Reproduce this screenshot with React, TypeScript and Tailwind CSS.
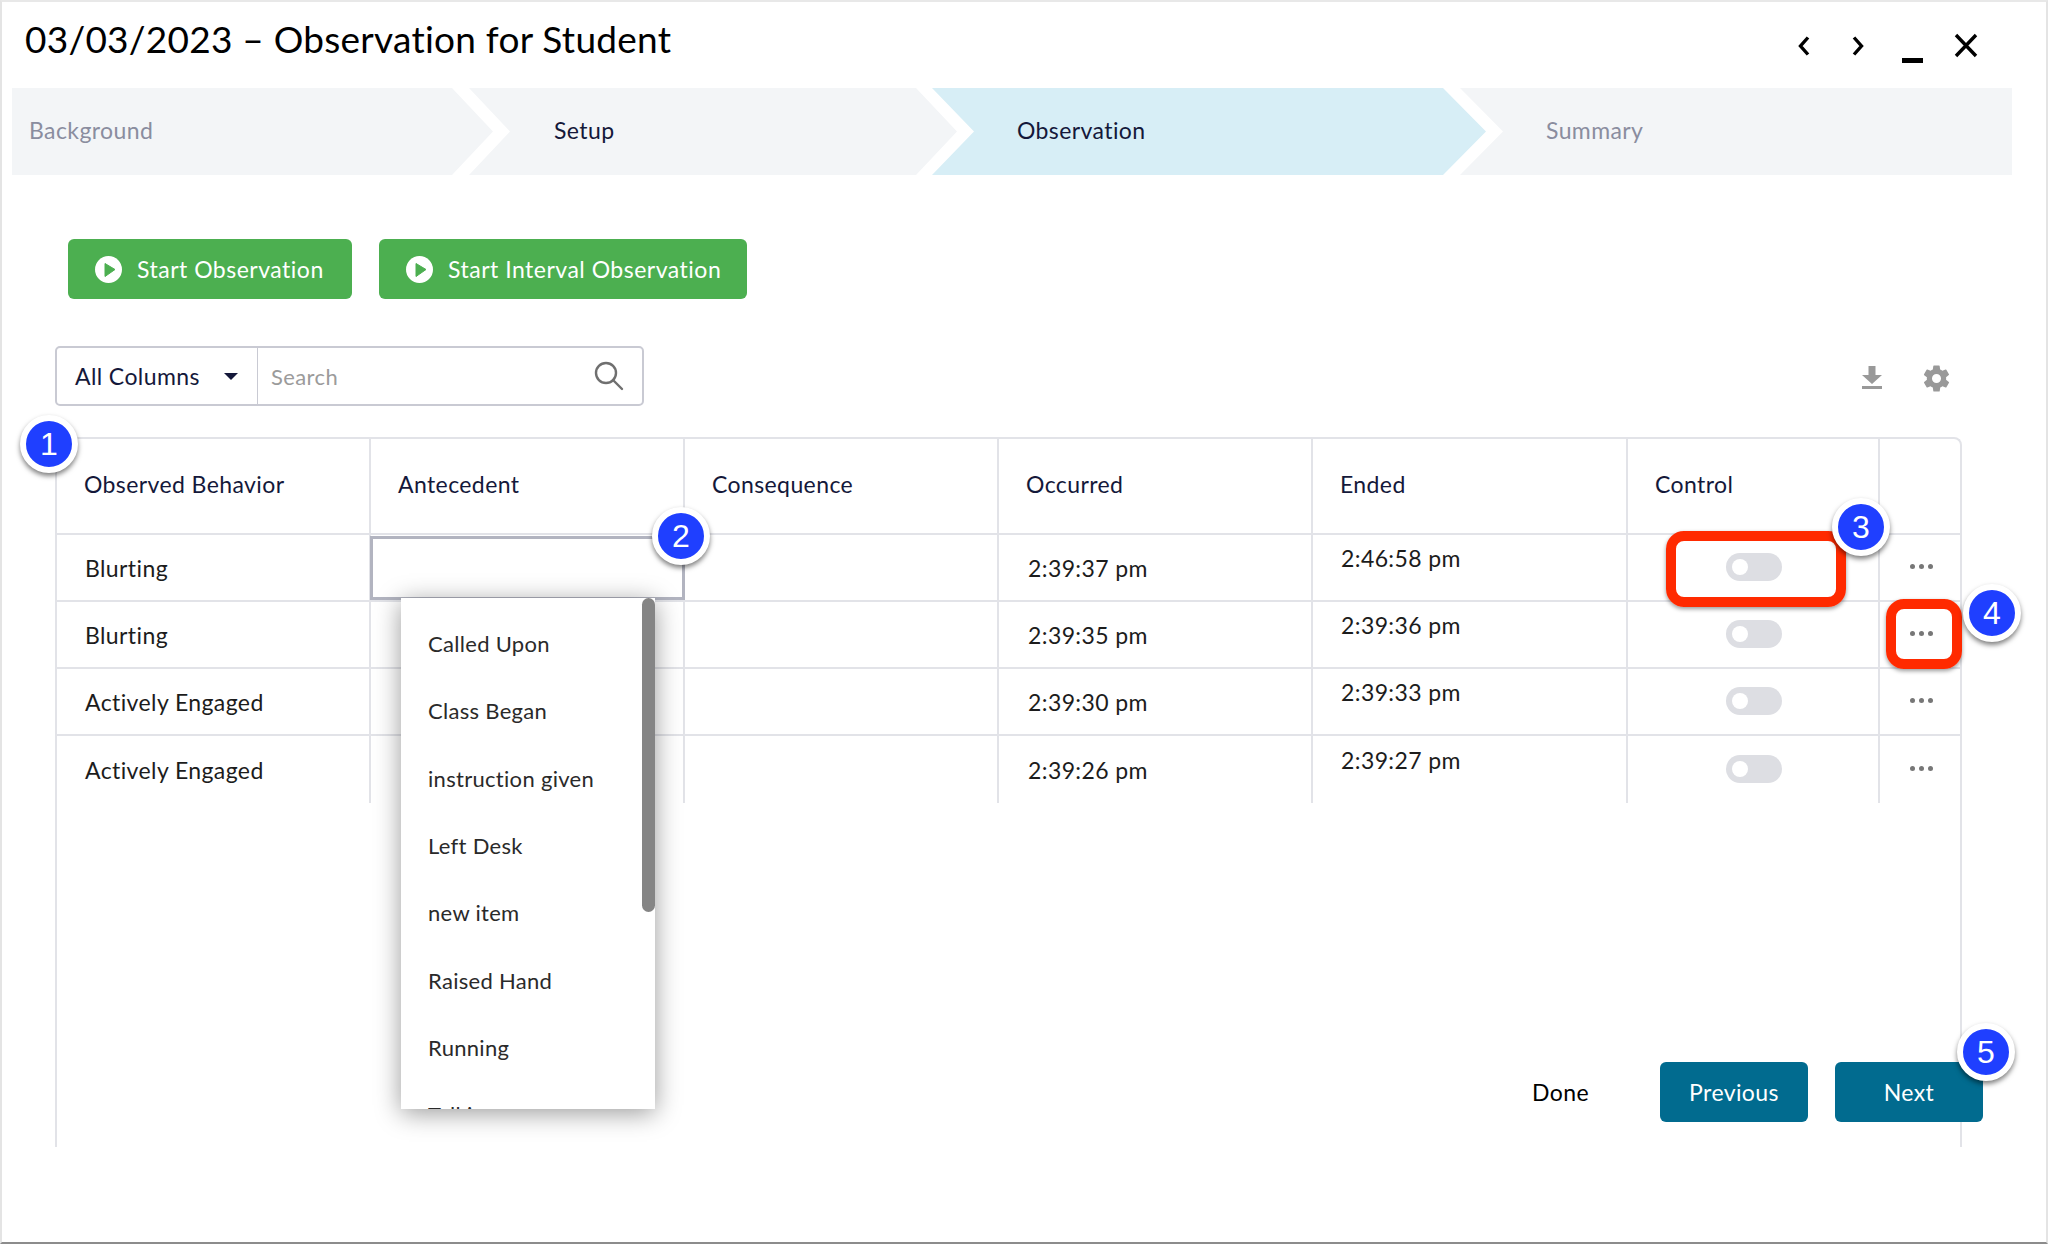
const font = "font-['Lato','Liberation_Sans',sans-serif]"

const rows = [
  { name: 'Blurting', occurred: '2:39:37 pm', ended: '2:46:58 pm' },
  { name: 'Blurting', occurred: '2:39:35 pm', ended: '2:39:36 pm' },
  { name: 'Actively Engaged', occurred: '2:39:30 pm', ended: '2:39:33 pm' },
  { name: 'Actively Engaged', occurred: '2:39:26 pm', ended: '2:39:27 pm' },
]

const items = ['Called Upon', 'Class Began', 'instruction given', 'Left Desk', 'new item', 'Raised Hand', 'Running', 'Talking']

function StartButton({ label, width }: { label: string; width: string }) {
  return (
    <button className={`${width} h-[60px] flex items-center gap-[15px] pl-[27px] bg-[#4caf50] rounded-[6px] text-white text-[23px] tracking-[0.5px]`}>
      <svg width="27" height="27" viewBox="0 0 27 27">
        <circle cx="13.5" cy="13.5" r="13.5" fill="#fff" />
        <path d="M10 7.5L20 13.5L10 20.5z" fill="#4caf50" stroke="#4caf50" strokeLinejoin="round" />
      </svg>
      {label}
    </button>
  )
}

function Badge({ n, className }: { n: number; className: string }) {
  return (
    <div className={`absolute ${className} w-[58px] h-[58px] rounded-full bg-[#1f3fff] border-[6px] border-white shadow-[0_3px_5px_rgba(0,0,0,0.5)] flex items-center justify-center text-white text-[32px] font-['Liberation_Sans',sans-serif]`}>
      {n}
    </div>
  )
}

export default function App() {
  return (
    <div className={`${font} relative w-[2048px] h-[1244px] overflow-hidden bg-white border-2 border-l-[#e4e4e4] border-r-[#e4e4e4] border-t-[#e8e8e8] border-b-[#8c8c8c] text-[#14183a]`}>
      <div className="flex justify-between h-[86px]">
        <h1 className="pl-[23px] pt-[15px] text-[37px] leading-[44px] text-black tracking-[0.25px]">03/03/2023 – Observation for Student</h1>
        <div className="flex items-start text-black pr-[67px] pt-[31px]">
          <svg width="26" height="26" viewBox="0 0 26 26" fill="none" stroke="#000" strokeWidth="3.4"><path d="M17 4.5L9.5 13L17 21.5" /></svg>
          <svg className="ml-[28px]" width="26" height="26" viewBox="0 0 26 26" fill="none" stroke="#000" strokeWidth="3.4"><path d="M9 4.5L16.5 13L9 21.5" /></svg>
          <div className="ml-[31px] w-[21px] h-[26px] flex items-end"><div className="w-full h-[5px] bg-black translate-y-[4px]" /></div>
          <svg className="ml-[30px]" width="26" height="26" viewBox="0 0 26 26" fill="none" stroke="#000" strokeWidth="3.4"><path d="M3 2l20 21M23 2L3 23" /></svg>
        </div>
      </div>

      <div className="flex ml-[10px] h-[87px] text-[23px] tracking-[0.4px] items-stretch">
        <div className="w-[481px] bg-[#f3f5f7] flex items-center pb-[2px] pl-[17px] text-[#8a8d9f] [clip-path:polygon(0_0,440px_0,100%_50%,440px_100%,0_100%)]">Background</div>
        <div className="w-[488px] -ml-[24px] bg-[#f3f5f7] flex items-center pb-[2px] pl-[85px] [clip-path:polygon(0_0,447px_0,100%_50%,447px_100%,0_100%,41px_50%)]">Setup</div>
        <div className="w-[554px] -ml-[25px] bg-[#d7eef6] flex items-center pb-[2px] pl-[85px] [clip-path:polygon(0_0,511px_0,100%_50%,511px_100%,0_100%,42px_50%)]">Observation</div>
        <div className="w-[552px] -ml-[26px] bg-[#f3f5f7] flex items-center pb-[2px] pl-[86px] text-[#8a8d9f] [clip-path:polygon(0_0,100%_0,100%_100%,0_100%,43px_50%)]">Summary</div>
      </div>

      <div className="flex gap-[27px] ml-[66px] mt-[64px]">
        <StartButton label="Start Observation" width="w-[284px]" />
        <StartButton label="Start Interval Observation" width="w-[368px]" />
      </div>

      <div className="flex items-center justify-between ml-[53px] mr-[94px] mt-[47px]">
        <div className="w-[589px] h-[60px] flex border-2 border-[#c9cad3] rounded-[5px]">
          <div className="w-[201px] flex items-center justify-between pl-[18px] pr-[19px] border-r border-[#c9cad3] text-[23px] tracking-[0.4px]">
            All Columns
            <span className="w-0 h-0 border-x-[7px] border-x-transparent border-t-[7px] border-t-[#14183a]" />
          </div>
          <div className="flex-1 flex items-center justify-between pl-[13px] pr-[18px] text-[22px] tracking-[0.4px] text-[#9b9b9b]">
            Search
            <svg width="30" height="30" viewBox="0 0 30 30" fill="none" stroke="#6f6f6f" strokeWidth="2.4"><circle cx="12" cy="12" r="10" /><path d="M19 19l9 9" strokeLinecap="round" /></svg>
          </div>
        </div>
        <div className="flex items-center gap-[38px] pt-[4px]">
          <svg width="22" height="26" viewBox="0 0 22 26" fill="#999"><path d="M7.5 1h7v9H21l-10 9L1 10h6.5z" /><rect x="1" y="21" width="20" height="3" /></svg>
          <svg width="31" height="31" viewBox="0 0 24 24" fill="#999"><path fillRule="evenodd" d="M19.4 13c.04-.33.06-.66.06-1s-.02-.67-.06-1l2.1-1.65a.5.5 0 0 0 .12-.64l-2-3.46a.5.5 0 0 0-.6-.22l-2.5 1a7.3 7.3 0 0 0-1.7-1l-.38-2.65A.5.5 0 0 0 14 2h-4a.5.5 0 0 0-.5.42L9.14 5.07a7.7 7.7 0 0 0-1.7 1l-2.49-1a.5.5 0 0 0-.61.22l-2 3.46a.5.5 0 0 0 .12.64L4.57 11a8 8 0 0 0 0 2l-2.11 1.65a.5.5 0 0 0-.12.64l2 3.46c.12.22.38.3.6.22l2.5-1c.52.4 1.08.73 1.7 1l.38 2.65c.04.24.25.42.49.42h4c.25 0 .46-.18.5-.42l.37-2.65a7.7 7.7 0 0 0 1.7-1l2.49 1c.23.08.49 0 .61-.22l2-3.46a.5.5 0 0 0-.12-.64zM12 15.5a3.5 3.5 0 1 1 0-7 3.5 3.5 0 0 1 0 7z" /></svg>
        </div>
      </div>

      <div className="ml-[53px] mt-[31px] w-[1907px] h-[710px] flex flex-col border-x-2 border-t-2 border-[#e2e3e8] rounded-t-[8px] text-[23px] tracking-[0.4px]">
        <div className="grid grid-cols-[314px_314px_314px_314px_315px_252px_1fr] h-[96px] border-b-2 border-[#e2e3e8]">
          {['Observed Behavior', 'Antecedent', 'Consequence', 'Occurred', 'Ended', 'Control', ''].map((h, i) => (
            <div key={i} className={`flex items-center pl-[27px] pb-[3px] ${i < 6 ? 'border-r-2 border-[#e2e3e8]' : ''}`}>{h}</div>
          ))}
        </div>
        {rows.map((r, i) => (
          <div key={i} className={`grid grid-cols-[314px_314px_314px_314px_315px_252px_1fr] h-[67px] text-[#1c1c1c] ${i < 3 ? 'border-b-2 border-[#e2e3e8]' : ''}`}>
            <div className="flex items-center pl-[28px] pt-[1px] border-r-2 border-[#e2e3e8]">{r.name}</div>
            <div className="border-r-2 border-[#e2e3e8]" />
            <div className="border-r-2 border-[#e2e3e8]" />
            <div className="flex items-center pl-[29px] pt-[1px] border-r-2 border-[#e2e3e8]">{r.occurred}</div>
            <div className="flex items-center pl-[28px] pb-[18px] border-r-2 border-[#e2e3e8]">{r.ended}</div>
            <div className="flex items-center justify-center border-r-2 border-[#e2e3e8] pb-[2px] pl-[2px]">
              <div className="w-[56px] h-[28px] rounded-full bg-[#dddee3] flex items-center pl-[6px]">
                <div className="w-[16px] h-[16px] rounded-full bg-white" />
              </div>
            </div>
            <div className="flex items-center justify-center gap-[4px] pb-[2px] pl-[2px]">
              <span className="w-[5px] h-[5px] rounded-full bg-[#777]" />
              <span className="w-[5px] h-[5px] rounded-full bg-[#777]" />
              <span className="w-[5px] h-[5px] rounded-full bg-[#777]" />
            </div>
          </div>
        ))}
        <div className="flex-1 flex items-end justify-end -mr-[23px] pb-[25px]">
          <span className="mr-[71px] h-[60px] flex items-center text-black">Done</span>
          <button className="w-[148px] h-[60px] rounded-[6px] bg-[#016b8f] text-white mr-[27px]">Previous</button>
          <button className="w-[148px] h-[60px] rounded-[6px] bg-[#016b8f] text-white">Next</button>
        </div>
      </div>

      <div className="absolute left-[368px] top-[534px] w-[315px] h-[64px] border-[3px] border-[#b2b4c0] bg-white" />
      <div className="absolute left-[399px] top-[596px] w-[254px] h-[511px] overflow-hidden bg-white shadow-[0_4px_24px_rgba(0,0,0,0.4)] text-[22px] tracking-[0.3px] text-[#2a2a2a]">
        <div className="flex flex-col pt-[12px]">
          {items.map((t) => (
            <div key={t} className="h-[67.3px] shrink-0 flex items-center pl-[27px]">{t}</div>
          ))}
        </div>
        <div className="absolute right-0 top-0 w-[13px] h-[314px] rounded-full bg-[#858585]" />
      </div>

      <div className="absolute left-[1664px] top-[529px] w-[180px] h-[76px] rounded-[18px] border-[10px] border-[#ff2a00] shadow-[0_2px_4px_rgba(0,0,0,0.4)]" />
      <div className="absolute left-[1884px] top-[597px] w-[76px] h-[70px] rounded-[18px] border-[10px] border-[#ff2a00] shadow-[0_2px_4px_rgba(0,0,0,0.4)]" />

      <Badge n={1} className="left-[18px] top-[413px]" />
      <Badge n={2} className="left-[650px] top-[505px]" />
      <Badge n={3} className="left-[1830px] top-[496px]" />
      <Badge n={4} className="left-[1961px] top-[582px]" />
      <Badge n={5} className="left-[1955px] top-[1021px]" />
    </div>
  )
}
